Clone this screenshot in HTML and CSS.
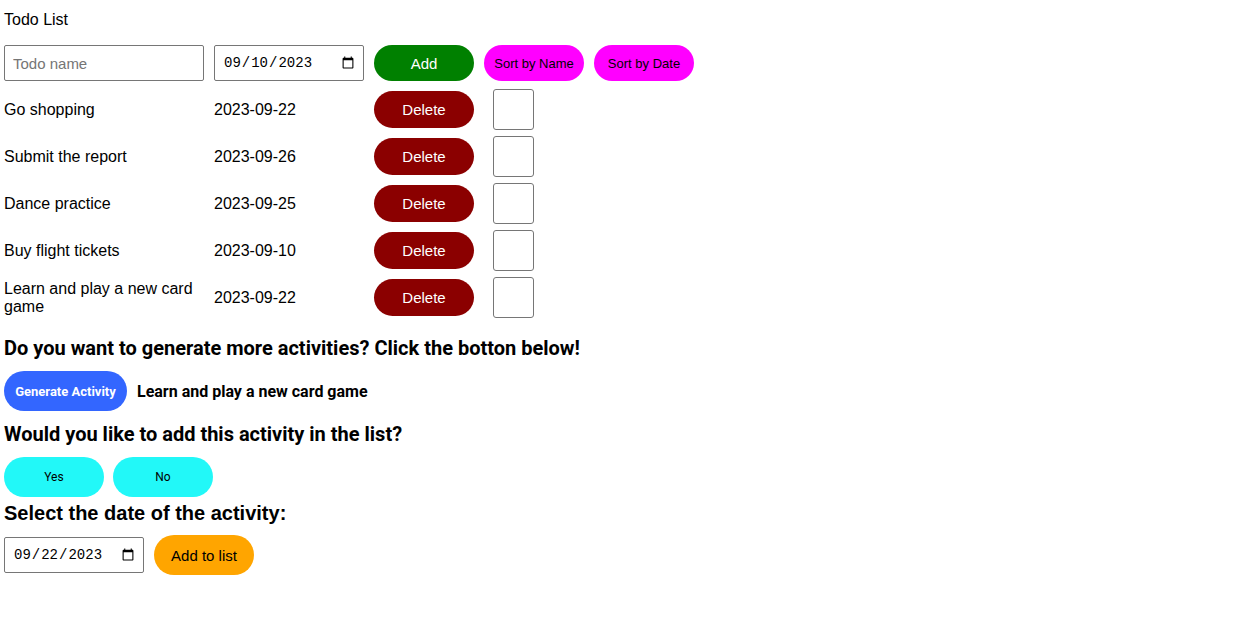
FILE: index.html
```html
<!DOCTYPE html>
<html>
<head>
<meta charset="utf-8">
<link rel="stylesheet" href="styles.css">
</head>
<body>
<div class="title">Todo List</div>
<div class="add-row">
  <input class="name-input" type="text" placeholder="Todo name">
  <input class="date-input" type="date" value="2023-09-10">
  <button class="btn add">Add</button>
  <button class="btn sort">Sort by Name</button>
  <button class="btn sort">Sort by Date</button>
</div>
<div class="list">
  <div class="row"><span class="name">Go shopping</span><span class="date">2023-09-22</span><button class="btn del">Delete</button><span class="check"></span></div>
  <div class="row"><span class="name">Submit the report</span><span class="date">2023-09-26</span><button class="btn del">Delete</button><span class="check"></span></div>
  <div class="row"><span class="name">Dance practice</span><span class="date">2023-09-25</span><button class="btn del">Delete</button><span class="check"></span></div>
  <div class="row"><span class="name">Buy flight tickets</span><span class="date">2023-09-10</span><button class="btn del">Delete</button><span class="check"></span></div>
  <div class="row"><span class="name">Learn and play a new card game</span><span class="date">2023-09-22</span><button class="btn del">Delete</button><span class="check"></span></div>
</div>
<h2 class="h h1">Do you want to generate more activities? Click the botton below!</h2>
<div class="gen-row">
  <button class="btn gen">Generate Activity</button>
  <span class="activity">Learn and play a new card game</span>
</div>
<h2 class="h h2">Would you like to add this activity in the list?</h2>
<div class="yn-row">
  <button class="btn yn">Yes</button>
  <button class="btn yn">No</button>
</div>
<h2 class="h h3">Select the date of the activity:</h2>
<div class="final-row">
  <input class="date-input small" type="date" value="2023-09-22">
  <button class="btn addlist">Add to list</button>
</div>
</body>
</html>
```

FILE: styles.css
```css
body {
  margin: 0;
  padding: 0 4px;
  font-family: "Liberation Sans", Arial, sans-serif;
  font-size: 16px;
  color: #000;
  background: #fff;
}
.title {
  margin-top: 11px;
  line-height: 18px;
}
.add-row {
  margin-top: 16px;
  display: flex;
  gap: 10px;
  height: 36px;
}
.name-input {
  box-sizing: border-box;
  width: 200px;
  height: 36px;
  margin: 0;
  border: 1px solid #767676;
  border-radius: 2px;
  padding: 0 8px;
  font-family: "Liberation Sans", Arial, sans-serif;
  font-size: 15px;
}
.name-input::placeholder { color: #757575; }
.date-input {
  box-sizing: border-box;
  width: 150px;
  height: 36px;
  margin: 0;
  border: 1px solid #767676;
  border-radius: 2px;
  padding: 0 6px 0 8px;
  font-family: "Liberation Mono", monospace;
  font-size: 14px;
  color: #000;
  background: #fff;
}
.date-input.small { width: 140px; }
.btn {
  box-sizing: border-box;
  border: none;
  margin: 0;
  padding: 0;
  width: 100px;
  border-radius: 20px;
  font-family: "Liberation Sans", Arial, sans-serif;
  cursor: pointer;
}
.add {
  height: 36px;
  background: #008000;
  color: #fff;
  font-size: 15px;
}
.sort {
  height: 36px;
  background: #ff00ff;
  color: #000;
  font-size: 13px;
}
.list {
  margin-top: 8px;
  display: flex;
  flex-direction: column;
  gap: 6px;
}
.row {
  display: flex;
  align-items: center;
  height: 41px;
}
.name {
  width: 200px;
  line-height: 18px;
  margin-right: 10px;
}
.date {
  width: 150px;
  margin-right: 10px;
}
.del {
  height: 37px;
  background: #8b0000;
  color: #fff;
  font-size: 15px;
  margin-right: 19px;
}
.check {
  box-sizing: border-box;
  width: 41px;
  height: 41px;
  border: 1px solid #767676;
  border-radius: 3px;
  background: #fff;
}
.h {
  font-family: Roboto, "Liberation Sans", sans-serif;
  font-weight: 700;
  font-size: 20px;
  line-height: 24px;
  margin: 0;
}
.h1 { margin-top: 18px; }
.gen-row {
  margin-top: 11px;
  display: flex;
  align-items: center;
  gap: 10px;
  height: 40px;
}
.gen {
  width: 123px;
  height: 40px;
  background: #3366ff;
  color: #fff;
  font-family: Roboto, sans-serif;
  font-weight: 700;
  font-size: 13px;
}
.activity {
  font-family: Roboto, sans-serif;
  font-weight: 700;
  font-size: 16px;
}
.h2 { margin-top: 11px; }
.yn-row {
  margin-top: 11px;
  display: flex;
  gap: 9px;
}
.yn {
  height: 40px;
  background: #22f8f8;
  color: #000;
  font-family: Roboto, sans-serif;
  font-size: 12px;
}
.h3 {
  margin-top: 4px;
  font-family: "Liberation Sans", Arial, sans-serif;
}
.final-row {
  margin-top: 10px;
  display: flex;
  align-items: center;
  gap: 10px;
}
.addlist {
  height: 40px;
  background: #ffa500;
  color: #000;
  font-size: 15px;
}
```
